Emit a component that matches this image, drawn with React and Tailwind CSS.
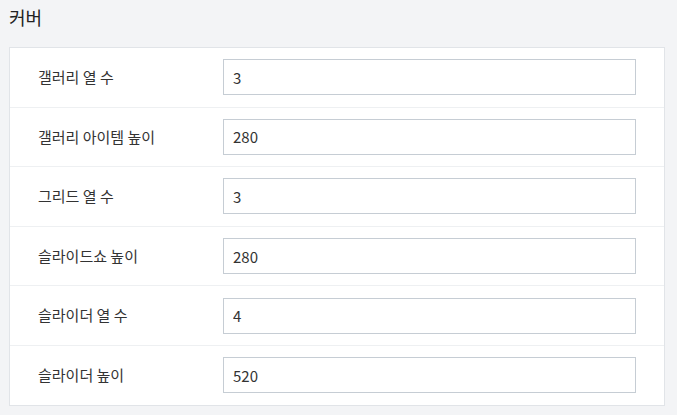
export default function App() {
  const rows = [
    ["갤러리 열 수", "3"],
    ["갤러리 아이템 높이", "280"],
    ["그리드 열 수", "3"],
    ["슬라이드쇼 높이", "280"],
    ["슬라이더 열 수", "4"],
    ["슬라이더 높이", "520"],
  ];
  return (
    <div
      className="w-[677px] h-[415px] bg-[#f3f4f6] overflow-hidden"
      style={{ fontFamily: '"Noto Sans CJK KR", "Noto Sans", sans-serif' }}
    >
      <div className="h-[47px] px-[9px] pt-[4px] text-[18px] leading-[26px] text-[#222]">커버</div>
      <div className="ml-[9px] w-[656px] bg-white border border-[#e1e4e8]">
        {rows.map(([label, value], i) => (
          <div
            key={i}
            className={
              "flex items-center px-[28px] py-[11.3px] " +
              (i < rows.length - 1 ? "border-b border-[#eef0f2]" : "")
            }
          >
            <div className="w-[185px] text-[15px] text-[#333]">{label}</div>
            <input
              defaultValue={value}
              className="flex-1 h-[36px] border border-[#c6cdd4] px-[9px] text-[15px] text-[#333] outline-none bg-white"
              style={{ fontFamily: '"Noto Sans CJK KR", "Noto Sans", sans-serif' }}
            />
          </div>
        ))}
      </div>
    </div>
  );
}
